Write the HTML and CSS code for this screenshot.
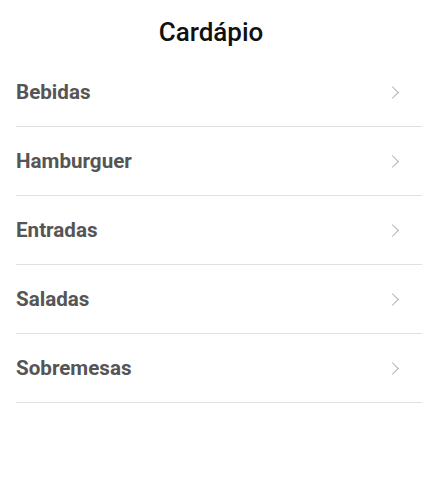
FILE: index.html
```html
<!DOCTYPE html>
<html lang="pt-BR">
<head>
    <meta charset="UTF-8">
    <title>Cardápio</title>
    <meta name="viewport" content="width=device-width,initial-scale=1">
    <link rel="stylesheet" href="styles.css">
</head>
<body>
    <header class="header">
        <h1 class="title">Cardápio</h1>
    </header>

    <ul class="menu-list">
        <li class="menu-item"><span class="menu-label">Bebidas</span><span class="chevron"></span></li>
        <li class="menu-item"><span class="menu-label">Hamburguer</span><span class="chevron"></span></li>
        <li class="menu-item"><span class="menu-label">Entradas</span><span class="chevron"></span></li>
        <li class="menu-item"><span class="menu-label">Saladas</span><span class="chevron"></span></li>
        <li class="menu-item"><span class="menu-label">Sobremesas</span><span class="chevron"></span></li>
    </ul>
</body>
</html>
```

FILE: styles.css
```css
* {
    margin: 0;
    padding: 0;
    box-sizing: border-box;
}

body {
    font-family: Roboto, 'Liberation Sans', Arial, sans-serif;
    background: #fff;
    color: #000;
}

.header {
    height: 58px;
    display: flex;
    align-items: center;
    justify-content: center;
    padding-top: 6px;
}

.title {
    font-size: 26px;
    font-weight: 500;
    color: #111;
}

.menu-list {
    list-style: none;
    padding-left: 16px;
}

.menu-item {
    height: 69px;
    display: flex;
    align-items: center;
    justify-content: space-between;
    padding-right: 25px;
    border-bottom: 1px solid #e0e0e0;
}

.menu-label {
    font-size: 20.6px;
    font-weight: 700;
    color: #555;
}

/* chevron drawn as rotated border */
.chevron {
    width: 9px;
    height: 9px;
    border-top: 1.5px solid #b0b0b0;
    border-right: 1.5px solid #b0b0b0;
    transform: rotate(45deg);
}
```
